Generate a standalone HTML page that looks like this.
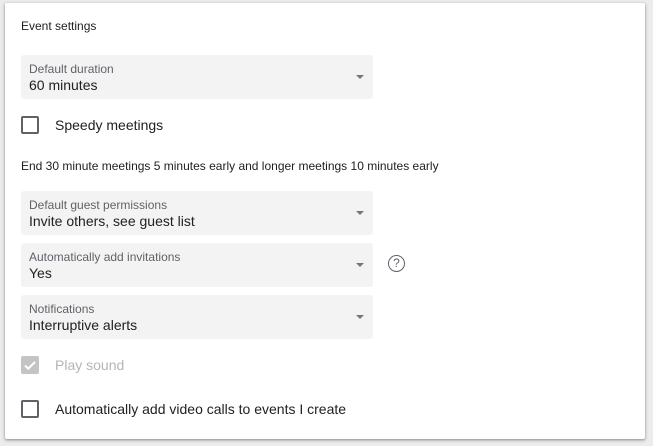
<!DOCTYPE html><html><head><style>
body{margin:0;width:653px;height:446px;background:#ececec;font-family:"Liberation Sans",Arial,sans-serif;position:relative;overflow:hidden}
.card{position:absolute;left:5px;top:3px;width:640px;height:436px;background:#fff;border-radius:2px;box-shadow:0 1px 2px rgba(0,0,0,.3),0 1px 3px 1px rgba(0,0,0,.12)}
.a{position:absolute}
.sel{position:absolute;left:21px;width:352px;height:44px;background:#f3f3f3;border-radius:3px}
.sel .l{position:absolute;left:8px;top:7px;font-size:12px;color:#5f6368}
.sel .v{position:absolute;left:8px;top:22px;font-size:14px;color:#202124}
.sel .ar{position:absolute;right:9px;top:20px;width:0;height:0;border-left:4px solid transparent;border-right:4px solid transparent;border-top:4px solid #777}
.cb{position:absolute;left:21px;width:14px;height:14px;border:2px solid #5f6368;border-radius:2px}
.t{position:absolute;font-size:14px;color:#202124}
</style></head><body>
<div class="card"></div>
<div class="a" style="left:21px;top:19px;font-size:12px;color:#202124">Event settings</div>
<div class="sel" style="top:55px"><div class="l">Default duration</div><div class="v">60 minutes</div><div class="ar"></div></div>
<div class="cb" style="top:116px"></div><div class="t" style="left:55px;top:117px">Speedy meetings</div>
<div class="a" style="left:21px;top:159px;font-size:12px;color:#202124">End 30 minute meetings 5 minutes early and longer meetings 10 minutes early</div>
<div class="sel" style="top:191px"><div class="l">Default guest permissions</div><div class="v">Invite others, see guest list</div><div class="ar"></div></div>
<div class="sel" style="top:243px"><div class="l">Automatically add invitations</div><div class="v">Yes</div><div class="ar"></div></div>
<div class="a" style="left:388px;top:255px;width:15px;height:15px;border:1.8px solid #5f6368;border-radius:50%;font-size:12px;line-height:15px;text-align:center;color:#5f6368">?</div>
<div class="sel" style="top:295px"><div class="l">Notifications</div><div class="v">Interruptive alerts</div><div class="ar"></div></div>
<div class="a" style="left:21px;top:356px;width:18px;height:18px;background:#c4c4c4;border-radius:2px"><svg width="18" height="18"><path d="M4 9.5l3.2 3.2L14 6" stroke="#fff" stroke-width="2" fill="none"/></svg></div>
<div class="t" style="left:55px;top:357px;color:#b5b5b5">Play sound</div>
<div class="cb" style="top:400px"></div><div class="t" style="left:55px;top:401px">Automatically add video calls to events I create</div>
</body></html>
